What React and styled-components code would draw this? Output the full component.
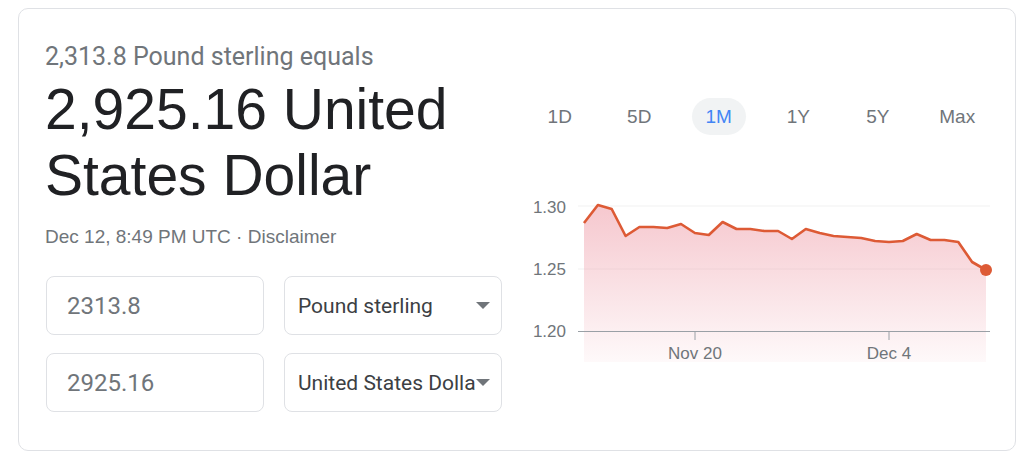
import styled, { createGlobalStyle } from "styled-components";

const GlobalStyle = createGlobalStyle`
  html, body {
    margin: 0;
    padding: 0;
    background: #ffffff;
  }
`;

const ranges = ["1D", "5D", "1M", "1Y", "5Y", "Max"];

// page y of each point, x steps evenly from 583 to 985
const rates = [
  223, 205, 209, 236, 227, 227, 228, 224, 233, 235, 222, 229, 229, 231, 231,
  239, 229, 233, 236, 237, 238, 241, 242, 241, 234, 240, 240, 242, 262, 270,
];

// chart svg sits at page x 520, y 190
const OX = 520;
const OY = 190;

export default function App() {
  const step = (985 - 583) / (rates.length - 1);
  const pts = rates.map((y, i) => [583 + i * step - OX, y - OY]);
  const line = pts.map((p, i) => (i ? "L" : "M") + p[0].toFixed(1) + " " + p[1]).join(" ");
  const last = pts[pts.length - 1];
  const area = line + ` L${last[0].toFixed(1)} 172 L${pts[0][0].toFixed(1)} 172 Z`;

  return (
    <>
      <GlobalStyle />
      <Card>
        <LeftCol>
          <Subtitle>2,313.8 Pound sterling equals</Subtitle>
          <BigValue>2,925.16 United States Dollar</BigValue>
          <Meta>
            Dec 12, 8:49 PM UTC · <span>Disclaimer</span>
          </Meta>
          <Converter>
            <AmountBox>2313.8</AmountBox>
            <CurrencySelect>
              <span>Pound sterling</span>
              <Caret />
            </CurrencySelect>
            <AmountBox>2925.16</AmountBox>
            <CurrencySelect>
              <span>United States Dollar</span>
              <Caret />
            </CurrencySelect>
          </Converter>
        </LeftCol>
        <RightCol>
          <Tabs>
            {ranges.map((r) => (
              <Tab key={r} $active={r === "1M"}>
                <span>{r}</span>
              </Tab>
            ))}
          </Tabs>
          <Chart width="480" height="180" viewBox="0 0 480 180">
            <defs>
              <linearGradient id="fill" x1="0" y1="0" x2="0" y2="1">
                <stop offset="0" stopColor="#ee9aa6" stopOpacity="0.55" />
                <stop offset="1" stopColor="#ee9aa6" stopOpacity="0.06" />
              </linearGradient>
            </defs>
            <line x1="57" y1="16" x2="469" y2="16" stroke="#f1f1f1" strokeWidth="1" />
            <line x1="57" y1="79" x2="469" y2="79" stroke="#f1f1f1" strokeWidth="1" />
            <path d={area} fill="url(#fill)" />
            <line x1="57" y1="141.5" x2="469" y2="141.5" stroke="#9aa0a6" strokeWidth="1" />
            <line x1="174" y1="141" x2="174" y2="150" stroke="#9aa0a6" strokeWidth="1" />
            <line x1="368" y1="141" x2="368" y2="150" stroke="#9aa0a6" strokeWidth="1" />
            <path d={line} fill="none" stroke="#dd5a35" strokeWidth="2.6" strokeLinejoin="round" />
            <circle cx={last[0]} cy={last[1]} r="6" fill="#dd5a35" />
            <AxisText x="45" y="23" textAnchor="end">1.30</AxisText>
            <AxisText x="45" y="85" textAnchor="end">1.25</AxisText>
            <AxisText x="45" y="147" textAnchor="end">1.20</AxisText>
            <AxisText x="174" y="169" textAnchor="middle">Nov 20</AxisText>
            <AxisText x="368" y="169" textAnchor="middle">Dec 4</AxisText>
          </Chart>
        </RightCol>
      </Card>
    </>
  );
}

const Card = styled.div`
  box-sizing: border-box;
  margin: 8px 0 0 18px;
  width: 998px;
  height: 443px;
  border: 1px solid #dfe1e5;
  border-radius: 10px;
  display: flex;
  background: #fff;
`;

const LeftCol = styled.div`
  width: 501px;
  padding: 33px 0 0 26px;
  box-sizing: border-box;
`;

const Subtitle = styled.div`
  font-family: Roboto, "Liberation Sans", sans-serif;
  font-size: 25px;
  line-height: 30px;
  color: #70757a;
`;

const BigValue = styled.div`
  margin-top: 4px;
  font-family: "Liberation Sans", Arial, sans-serif;
  font-size: 57px;
  line-height: 66px;
  color: #202124;
  width: 450px;
`;

const Meta = styled.div`
  margin-top: 17px;
  font-family: "Liberation Sans", Arial, sans-serif;
  font-size: 19px;
  line-height: 24px;
  color: #70757a;
`;

const Converter = styled.div`
  margin-top: 27px;
  display: grid;
  grid-template-columns: 218px 218px;
  column-gap: 20px;
  row-gap: 18px;
  padding-left: 1px;
`;

const AmountBox = styled.div`
  box-sizing: border-box;
  height: 59px;
  border: 1px solid #dfe1e5;
  border-radius: 8px;
  padding: 0 20px;
  display: flex;
  align-items: center;
  font-family: Roboto, "Liberation Sans", sans-serif;
  font-size: 24px;
  color: #70757a;
`;

const CurrencySelect = styled.div`
  box-sizing: border-box;
  height: 59px;
  border: 1px solid #dfe1e5;
  border-radius: 8px;
  padding: 0 11px 0 13px;
  display: flex;
  align-items: center;
  font-family: Roboto, "Liberation Sans", sans-serif;
  font-size: 21px;
  color: #3c4043;
  overflow: hidden;

  span {
    flex: 1;
    min-width: 0;
    white-space: nowrap;
    overflow: hidden;
  }
`;

const Caret = styled.i`
  flex: none;
  width: 0;
  height: 0;
  border-left: 7px solid transparent;
  border-right: 7px solid transparent;
  border-top: 7px solid #70757a;
`;

const RightCol = styled.div`
  flex: 1;
  padding-top: 89px;
  display: flex;
  flex-direction: column;
`;

const Tabs = styled.div`
  display: flex;
`;

const Tab = styled.div`
  width: 79.5px;
  display: flex;
  justify-content: center;

  span {
    height: 37px;
    min-width: ${(p) => (p.$active ? "54px" : "auto")};
    border-radius: 19px;
    background: ${(p) => (p.$active ? "#f1f3f4" : "transparent")};
    color: ${(p) => (p.$active ? "#4285f4" : "#70757a")};
    display: flex;
    align-items: center;
    justify-content: center;
    font-family: "Liberation Sans", Arial, sans-serif;
    font-size: 19px;
  }
`;

const Chart = styled.svg`
  display: block;
  margin-top: 55px;
  margin-left: 1px;
  overflow: visible;
`;

const AxisText = styled.text`
  font-family: "Liberation Sans", Arial, sans-serif;
  font-size: 17px;
  fill: #70757a;
`;
